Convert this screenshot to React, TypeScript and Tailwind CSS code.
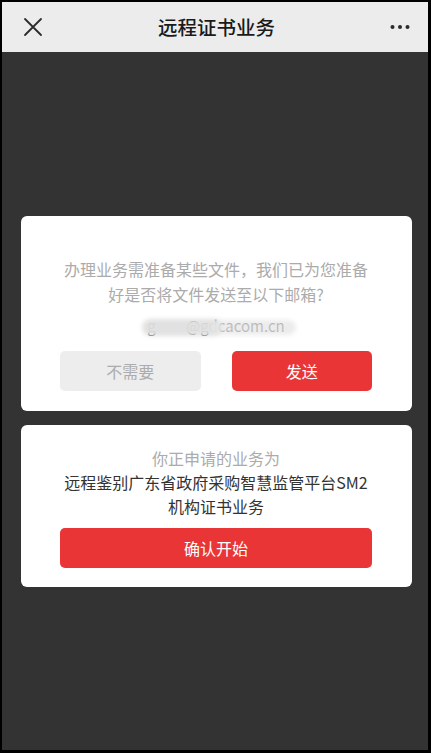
import React from "react";

const font = {
  fontFamily: '"Noto Sans CJK SC", "Noto Sans", "Liberation Sans", sans-serif',
};

const Header = () => (
  <div className="flex h-[50px] shrink-0 items-center justify-between bg-[#ececec] pl-5 pr-[18px]">
    <svg width="20" height="20" viewBox="0 0 20 20" className="ml-[1px]">
      <path
        d="M2 2 L18 18 M18 2 L2 18"
        stroke="#2b2b2b"
        strokeWidth="1.8"
        strokeLinecap="round"
      />
    </svg>
    <div className="text-[19.5px] font-medium text-[#1a1a1a]">远程证书业务</div>
    <svg width="20" height="6" viewBox="0 0 20 6">
      <circle cx="2.5" cy="3" r="2" fill="#2b2b2b" />
      <circle cx="10" cy="3" r="2" fill="#2b2b2b" />
      <circle cx="17.5" cy="3" r="2" fill="#2b2b2b" />
    </svg>
  </div>
);

export default function App() {
  return (
    <div
      className="flex h-[753px] w-[431px] flex-col border-t-2 border-l-2 border-r-[3px] border-b-[3px] border-black bg-[#333333]"
      style={font}
    >
      <Header />
      <div className="flex flex-1 flex-col justify-center gap-[14px] pl-[19px] pr-[16px]">
        <div className="rounded-[6px] bg-white pl-[39px] pr-[40px] pt-[41px] pb-[20px]">
          <p className="text-center text-[16px] leading-[25px] text-[#ababab]">
            办理业务需准备某些文件，我们已为您准备好是否将文件发送至以下邮箱?
          </p>
          {/* email is blurred in the source */}
          <div className="relative mt-[6px] flex h-[28px] items-center justify-center text-[15px] text-[#4a4a4a]">
            <span>g&nbsp;&nbsp;&nbsp;&nbsp;&nbsp;&nbsp;&nbsp;&nbsp;&nbsp;@gdcacom.cn</span>
            <div className="absolute left-[82px] top-[6px] h-[17px] w-[80px] rounded-full bg-[#e0e0e0] opacity-95 blur-[2px]" />
            <div className="absolute left-[150px] top-[7px] h-[15px] w-[86px] rounded-full bg-[#e6e6e6] opacity-75 blur-[2px]" />
          </div>
          <div className="mt-[10px] flex gap-[31px]">
            <button className="h-[40px] flex-1 rounded-[5px] bg-[#ededed] text-[16px] text-[#acacac]">
              不需要
            </button>
            <button className="h-[40px] flex-1 rounded-[5px] bg-[#e93536] text-[16px] text-white">
              发送
            </button>
          </div>
        </div>
        <div className="rounded-[6px] bg-white pl-[39px] pr-[40px] pt-[21px] pb-[19px] text-center">
          <p className="text-[16px] leading-[24px] text-[#ababab]">你正申请的业务为</p>
          <p className="text-[16px] leading-[24px] text-[#333]">
            远程鉴别广东省政府采购智慧监管平台SM2机构证书业务
          </p>
          <button className="mt-[10px] h-[40px] w-full rounded-[5px] bg-[#e93536] text-[16px] text-white">
            确认开始
          </button>
        </div>
      </div>
    </div>
  );
}
